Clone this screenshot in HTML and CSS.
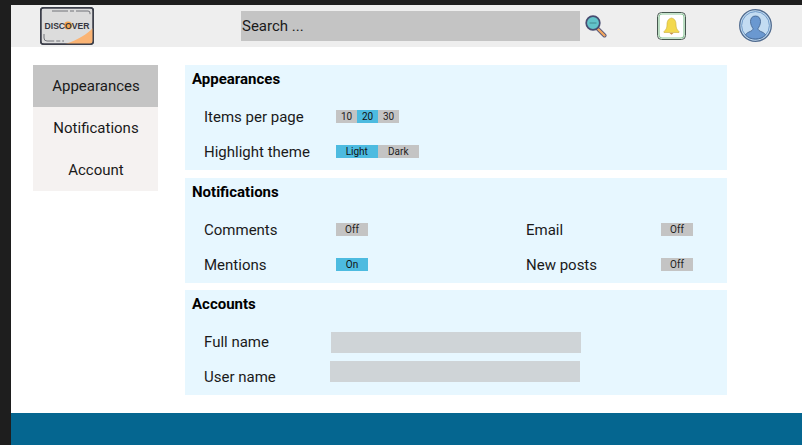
FILE: index.html
```html
<!DOCTYPE html>
<html>
<head>
	<meta charset="utf-8">
	<title>Settings</title>
	<link rel="stylesheet" href="styles.css">
</head>
<body>
<div class="page">
	<div class="header">
		<svg class="logo" width="54" height="38" viewBox="0 0 54 38">
			<rect x="0.75" y="0.75" width="52.5" height="36.5" rx="3" fill="#dcdcdc" stroke="#3c3f4a" stroke-width="1.5"/>
			<path d="M25 37 C38 33 47 27 53 21 V34 Q53 37 50 37 Z" fill="#fbb474"/>
			<rect x="0.75" y="0.75" width="52.5" height="36.5" rx="3" fill="none" stroke="#3c3f4a" stroke-width="1.5"/>
			<path d="M12 4 H48 Q50 4 50 6 V9 M4 27 V31 Q4 34 7 34 H24" fill="none" stroke="#55585f" stroke-width="0.8" stroke-dasharray="16 2 4 2"/>
			<circle cx="28" cy="18.5" r="4" fill="#f6a74f"/>
			<text class="logo-text" x="27" y="22">DISCOVER</text>
		</svg>
		<div class="search">Search ...</div>
		<svg class="lens" width="22" height="23" viewBox="0 0 22 23">
			<path d="M12 13 L19.5 20.5" stroke="#51557a" stroke-width="4" stroke-linecap="round"/>
			<path d="M12.5 13.5 L19.5 20.5" stroke="#f2a65e" stroke-width="2.4" stroke-linecap="round"/>
			<circle cx="8" cy="8" r="6.8" fill="#62c3c9" stroke="#474b70" stroke-width="1.7"/>
			<path d="M4.5 8 H11.5" stroke="#4b9aa0" stroke-width="1.4"/>
		</svg>
		<svg class="bell" width="29" height="28" viewBox="0 0 29 28">
			<rect x="0.5" y="0.5" width="28" height="27" rx="4" fill="#fff" stroke="#46574f" stroke-width="1"/>
			<rect x="2" y="2" width="25" height="24" rx="3" fill="none" stroke="#8ec79a" stroke-width="1.2"/>
			<path d="M14.5 6 C10.5 7 10 10 10 13 C10 16 9 17.8 7 19.5 V20.5 H22 V19.5 C20 17.8 19 16 19 13 C19 10 18.5 7 14.5 6 Z" fill="#f3d94e" stroke="#c9ad3a" stroke-width="0.6"/>
			<path d="M12.5 21 H16.5 L14.5 22.8 Z" fill="#c8914a"/>
		</svg>
		<svg class="avatar" width="33" height="33" viewBox="0 0 33 33">
			<circle cx="16.5" cy="16.5" r="15.8" fill="#c3dcf2" stroke="#4f6a8e" stroke-width="1.3"/>
			<circle cx="16.5" cy="16.5" r="13.9" fill="none" stroke="#6f9ac8" stroke-width="1"/>
			<path d="M16.5 7 C13 7 11.5 9.5 11.5 12.5 C11.5 15.5 13 18 14 19.5 C14 21 12.5 22 10 23 C8 23.8 6.8 25 6.5 26 C9 28.8 12.5 30 16.5 30 C20.5 30 24 28.8 26.5 26 C26.2 25 25 23.8 23 23 C20.5 22 19 21 19 19.5 C20 18 21.5 15.5 21.5 12.5 C21.5 9.5 20 7 16.5 7 Z" fill="#6a98d0" stroke="#3f5f8c" stroke-width="0.8"/>
		</svg>
	</div>

	<div class="main">
		<div class="sidebar">
			<div class="side-item side-active">Appearances</div>
			<div class="side-item">Notifications</div>
			<div class="side-item">Account</div>
		</div>

		<div class="panels">
			<div class="panel">
				<div class="panel-title">Appearances</div>
				<div class="row">
					<div class="label">Items per page</div>
					<div class="seg">
						<span class="opt opt-num">10</span><span class="opt opt-num opt-on">20</span><span class="opt opt-num">30</span>
					</div>
				</div>
				<div class="row">
					<div class="label">Highlight theme</div>
					<div class="seg">
						<span class="opt opt-word opt-on">Light</span><span class="opt opt-word">Dark</span>
					</div>
				</div>
			</div>

			<div class="panel">
				<div class="panel-title">Notifications</div>
				<div class="row">
					<div class="label">Comments</div>
					<span class="opt opt-toggle">Off</span>
					<div class="label label-right">Email</div>
					<span class="opt opt-toggle">Off</span>
				</div>
				<div class="row">
					<div class="label">Mentions</div>
					<span class="opt opt-toggle opt-on">On</span>
					<div class="label label-right">New posts</div>
					<span class="opt opt-toggle">Off</span>
				</div>
			</div>

			<div class="panel">
				<div class="panel-title">Accounts</div>
				<div class="row row-input">
					<div class="label">Full name</div>
					<div class="field"></div>
				</div>
				<div class="row row-input row-input2">
					<div class="label">User name</div>
					<div class="field"></div>
				</div>
			</div>
		</div>
	</div>

	<div class="footer"></div>
</div>
</body>
</html>
```

FILE: styles.css
```css
html, body {
	margin: 0;
	padding: 0;
	background: #1e1e1e;
}
.page {
	width: 791px;
	height: 440px;
	margin: 5px 0 0 11px;
	background: #ffffff;
	display: flex;
	flex-direction: column;
	font-family: Roboto, "Liberation Sans", sans-serif;
	color: #1a1a1a;
	overflow: hidden;
}

.header {
	height: 42px;
	flex: none;
	display: flex;
	align-items: flex-start;
	background: #eeeeee;
}
.logo {
	margin: 2px 0 0 29px;
	flex: none;
}
.logo-text {
	font-family: "Liberation Sans", sans-serif;
	font-size: 8.6px;
	font-weight: bold;
	fill: #34363f;
	text-anchor: middle;
}
.search {
	width: 339px;
	height: 30px;
	margin: 6px 0 0 147px;
	padding-left: 1px;
	box-sizing: border-box;
	background: #c4c4c4;
	font-size: 15px;
	line-height: 31px;
}
.lens {
	margin: 10px 0 0 5px;
	flex: none;
}
.bell {
	margin: 7px 0 0 50px;
	flex: none;
}
.avatar {
	margin: 4px 0 0 53px;
	flex: none;
}

.main {
	flex: 1;
	display: flex;
	align-items: flex-start;
	padding: 18px 0 0 22px;
}
.sidebar {
	width: 125px;
	flex: none;
	background: #f5f2f1;
}
.side-item {
	height: 42px;
	padding-left: 1px;
	box-sizing: border-box;
	line-height: 42px;
	text-align: center;
	font-size: 15px;
}
.side-active {
	background: #c4c4c4;
}

.panels {
	width: 542px;
	margin-left: 27px;
	display: flex;
	flex-direction: column;
}
.panel {
	height: 105px;
	margin-bottom: 8px;
	padding-left: 7px;
	box-sizing: border-box;
	background: #e7f7ff;
}
.panel:nth-child(2) {
	margin-bottom: 7px;
}
.panel-title {
	height: 28px;
	margin-bottom: 6px;
	line-height: 28px;
	font-size: 15px;
	font-weight: bold;
	color: #000000;
}
.row {
	height: 35px;
	display: flex;
	align-items: center;
	padding-left: 12px;
	font-size: 15px;
}
.label {
	width: 132px;
	flex: none;
}
.label-right {
	width: 135px;
	margin-left: 158px;
}
.seg {
	display: flex;
}
.opt {
	display: block;
	height: 13px;
	line-height: 13px;
	text-align: center;
	font-size: 10px;
	background: #c4c4c4;
	color: #222222;
}
.opt-num {
	width: 21px;
}
.opt-word {
	width: 41.5px;
}
.opt-toggle {
	width: 32px;
	flex: none;
}
.opt-on {
	background: #4dbbe0;
	color: #111111;
}
.row-input .label {
	width: 127px;
}
.field {
	width: 250px;
	height: 21px;
	margin-top: 2px;
	background: #cfd4d7;
}
.row-input2 .label {
	width: 126px;
}
.row-input2 .field {
	margin-top: -10px;
}

.footer {
	height: 32px;
	flex: none;
	background: #056690;
}
```
